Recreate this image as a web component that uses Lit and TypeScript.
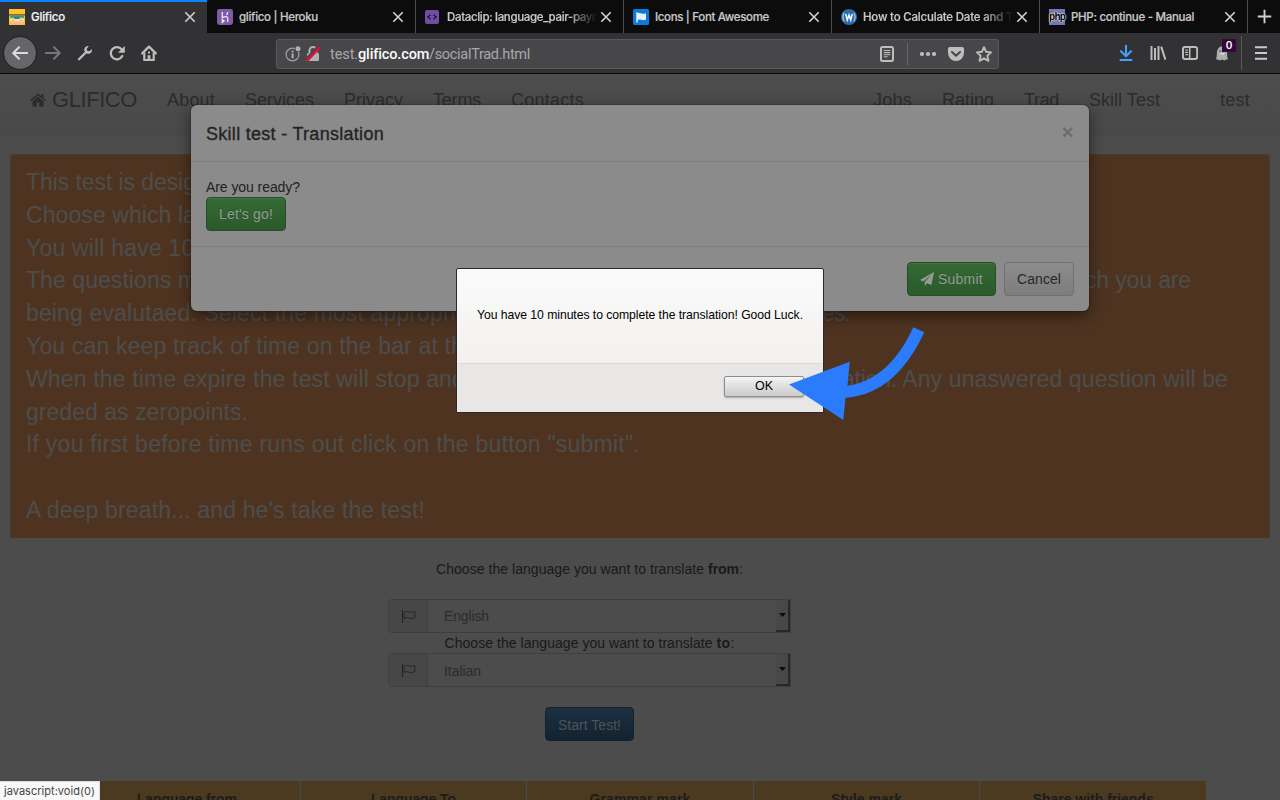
import { LitElement, html, css, svg } from "lit";
import { customElement, property } from "lit/decorators.js";

/** One line of text spread over a given width by letter spacing. */
@customElement("fit-text")
export class FitText extends LitElement {
  @property() text = "";
  @property({ type: Number }) w = 0;
  static styles = css`
    :host { display: inline-block; white-space: pre; flex: none; }
    .t { display: inline-block; white-space: pre; }
  `;
  render() {
    return html`<span class="t">${this.text}</span>`;
  }
  updated() {
    const span = this.renderRoot.querySelector(".t") as HTMLElement;
    span.style.letterSpacing = "0px";
    const natural = span.getBoundingClientRect().width;
    if (this.w && this.text.length) {
      span.style.letterSpacing = `${(this.w - natural) / this.text.length}px`;
      this.style.width = `${this.w}px`;
    }
  }
}

const fit = (text: string, w: number) => html`<fit-text .text=${text} .w=${w}></fit-text>`;

const icon = (body: unknown, size = 16, box = 16) =>
  html`<svg width=${size} height=${size} viewBox="0 0 ${box} ${box}" fill="none">${body}</svg>`;

const S = "#bdbdbe";
const icons = {
  glifico: svg`<path d="M0 0h16v16H0z" fill="#ffc22f"/><path d="M0 5.300h16v1.200H0z" fill="#5c4d28"/><path d="M1 6.500h14v2.200H1z" fill="#2b9c94"/><path d="M5.500 8.500h5v1.300h-5z" fill="#163f48"/><path d="M1 9.800h14v2.400H1z" fill="#e9dcc4"/><path d="M2 12h12v1.500H2z" fill="#f3c9a0"/><path d="M4 13.500h8V16H4z" fill="#f8b27c"/><path d="M3 11h2v1H3zM11 11h2v1h-2z" fill="#cdb6a6"/>`,
  heroku: svg`<rect width="16" height="16" rx="2.400" fill="#7e5ba6"/><path d="M5.300 3v5.700c3-1.500 5.400-1.600 5.400.600V13M10.700 3c0 1.300-.500 2.200-1.200 3M5.300 10.500l1.800 1.400-1.800 1.400z" stroke="#eee6f6" stroke-width="1.300"/>`,
  clip: svg`<rect x="0" y="1" width="14" height="14" rx="2" fill="#6f4fa5"/><path d="M5.500 5.800 2.800 8l2.700 2.200M8.500 5.800 11.200 8l-2.700 2.200" stroke="#17102a" stroke-width="1.200"/>`,
  fa: svg`<rect width="16" height="16" rx="1.500" fill="#0a7bdc"/><path d="M4 3.200v10.300" stroke="#e8f1fa" stroke-width="1.500"/><path d="M4 4.500c2-.900 3.300-.500 4.700 0 1.400.500 2.700.200 4.300-.300v6.300c-2 .900-3.500.700-4.900.200-1.500-.500-2.600-.200-4.100.500z" fill="#e8f1fa"/>`,
  wiki: svg`<circle cx="8" cy="8" r="8" fill="#2b6cab"/><path d="M3.200 3.700C1.500 6.500 1.500 9.500 3.200 12.300M12.800 3.700c1.700 2.800 1.700 5.800 0 8.600" stroke="#cfe0f0" stroke-width="1"/><path d="m4.700 5 1.600 6L8 6l1.700 5 1.600-6" stroke="#fff" stroke-width="1.500"/>`,
  x: svg`<path d="m2.600 2.600 10.800 10.800M13.400 2.600 2.600 13.400" stroke="#d0d0d1" stroke-width="1.900"/>`,
  plus: svg`<path d="M8 .800v14.400M.800 8h14.400" stroke="#d0d0d1" stroke-width="2"/>`,
  back: svg`<path d="M15.200 8H1.500M7 2.200 1.200 8 7 13.800" stroke="#dcdcdd" stroke-width="2" stroke-linecap="round" stroke-linejoin="round"/>`,
  fwd: svg`<path d="M.800 8h14M9 2.200 14.800 8 9 13.800" stroke="#77777a" stroke-width="2" stroke-linecap="round" stroke-linejoin="round"/>`,
  wrench: svg`<path d="M2 14.200 9 7.200" stroke="${S}" stroke-width="2.300" stroke-linecap="round"/><path d="M14.800 4.300 12.300 6.200l-2.200-.400-.400-2.100L11.800 1C8.800.600 6.700 3 7.400 6L10 8.700c3.300.600 5.700-1.400 4.800-4.400z" fill="${S}"/>`,
  reload: svg`<path d="M13.300 11A6.100 6.100 0 1 1 12.700 4.400" stroke="${S}" stroke-width="2.300" stroke-linecap="round"/><path d="M15.800.900v6.900H8.900z" fill="${S}"/>`,
  home: svg`<path d="M1.200 8.400 8 1.600l6.800 6.800" stroke="${S}" stroke-width="2.200" stroke-linecap="round" stroke-linejoin="round"/><path d="M3.300 7.500V15h9.400V7.500" stroke="${S}" stroke-width="2.200" stroke-linejoin="round"/><path d="M6.600 10.200h2.800V15H6.600zM7 6.500h2v2H7z" fill="${S}"/>`,
  info: svg`<circle cx="7.500" cy="8.500" r="6.400" stroke="#a4a4a6" stroke-width="1.200"/><path d="M6.600 7.400h2v4.900h-2z" fill="#b1b1b3"/><circle cx="7.600" cy="5.500" r="1.100" fill="#b1b1b3"/><circle cx="13" cy="2.700" r="3.300" fill="#474749"/><circle cx="13" cy="2.700" r="2.500" fill="#b1b1b3"/>`,
  lock: svg`<path d="M4.500 8V4.500a3.500 3.500 0 0 1 7 0V8" stroke="#b1b1b3" stroke-width="2"/><rect x="2" y="7.300" width="12" height="7.700" rx="1" fill="#b1b1b3"/><path d="M1 14.500 14 .900" stroke="#474749" stroke-width="4.200"/><path d="M1.500 15 14.700 1.200" stroke="#ff0039" stroke-width="2"/>`,
  reader: svg`<rect x="2" y="1" width="12" height="14" rx="1.500" stroke="${S}" stroke-width="2"/><path d="M4.700 4.500h6.600M4.700 6.600h6.600M4.700 8.700h6.600M4.700 10.800h4" stroke="${S}" stroke-width="1.100"/>`,
  dots: svg`<circle cx="2" cy="8" r="2.100" fill="${S}"/><circle cx="8" cy="8" r="2.100" fill="${S}"/><circle cx="14" cy="8" r="2.100" fill="${S}"/>`,
  pocket: svg`<path d="M1.800 1h12.400A1.800 1.800 0 0 1 16 2.800V7A8 8 0 0 1 0 7V2.800A1.800 1.800 0 0 1 1.800 1z" fill="${S}"/><path d="M4 6l4 3.800L12 6" stroke="#474749" stroke-width="2" stroke-linecap="round" stroke-linejoin="round"/>`,
  star: svg`<path d="m8 1.200 2.100 4.600 5 .600-3.700 3.400 1 5L8 12.300l-4.400 2.500 1-5L.900 6.400l5-.600z" stroke="${S}" stroke-width="1.900" stroke-linejoin="round"/>`,
  download: svg`<path d="M8 .500v10.500M3 6.300 8 11.300l5-5" stroke="#45a1ff" stroke-width="2" stroke-linecap="round" stroke-linejoin="round"/><path d="M2.500 15h11" stroke="#45a1ff" stroke-width="2" stroke-linecap="round"/>`,
  library: svg`<path d="M1.500 1v14M5 3v12M8.500 1v14M11.200 1.600l4.200 13" stroke="${S}" stroke-width="2"/>`,
  sidebar: svg`<rect x="1" y="2" width="14.200" height="12" rx="2" stroke="${S}" stroke-width="2"/><path d="M7.700 2v12" stroke="${S}" stroke-width="1.600"/><path d="M3 5h3M3 7.300h3M3.500 9.600H6" stroke="${S}" stroke-width="1.200"/>`,
  ghost: svg`<path d="M1.700 14.200c1.300-1.500 1-3.500 1.200-6.200C3.200 4 5 1.500 8 1.500s4.900 2.500 5.100 6.500c.100 2.700-.100 4.700 1.200 6.200l-2.200.400-1.700 1-2.400-1-2.300 1-1.900-1z" fill="#adadae"/><path d="M5.800 8.300c1.200 2 3.800 2 5 0z" fill="#dedede"/><circle cx="6.300" cy="6" r="1" fill="#6a6a6b"/>`,
  menu: svg`<path d="M2 2.300h12M2 8h12M2 13.700h12" stroke="#cacacb" stroke-width="2.100"/>`,
  house: svg`<path d="M8 1.500 0 8.300l1 1L8 3.600l7 5.700 1-1-2.500-2.100V2h-2.200v2.300zM8 4.800 2.500 9.300V14.500h4.200v-4h2.600v4h4.200V9.300z" fill="#2b2b2b"/>`,
  plane: svg`<path d="M14 0 0 8l3.300 1.400L11.500 2.500 4.800 10v4l2.200-2.800 4.400 1.800z" fill="#969b94"/>`,
  flag: svg`<path d="M1.500 1v13" stroke="#262626" stroke-width="1.100"/><path d="M3 3.500c2-1.500 3.500-1.300 5.300-.600 1.700.700 3.300.500 5.500-.400v6.200c-2.200 1.100-4 1.100-5.800.500-1.700-.600-3.300-.800-5 .400z" stroke="#262626" stroke-width="1"/>`,
};

const tabs = [
  { title: "Glifico", w: 34, icon: icons.glifico, cls: "tab active" },
  { title: "glifico | Heroku", w: 79, icon: icons.heroku, cls: "tab second" },
  { title: "Dataclip: language_pair-paym", w: 155, icon: icons.clip, cls: "tab long" },
  { title: "Icons | Font Awesome", w: 114, icon: icons.fa, cls: "tab" },
  { title: "How to Calculate Date and Ti", w: 153, icon: icons.wiki, cls: "tab long" },
  { title: "PHP: continue - Manual", w: 123, icon: null, cls: "tab" },
];

const copy: [string, number][][] = [
  [["This test is designed", 208], [" to evaluate your skills.", 240]],
  [["Choose which la", 170], ["nguage pair you want to test.", 300]],
  [["You will have 10 ", 175], ["minutes.", 86]],
  [["The questions m", 171], ["ay differ in topic and level, according to the language combination for whi", 888], ["ch you are", 106]],
  [["being evalutaed. Select the most appropri", 430], ["ate answer among the possible choic", 366], ["es.", 28]],
  [["You can keep track of time on the bar at th", 438], ["e bottom of the page", 216]],
  [["When the time expire the test will stop and", 439], [" you will not see the next transl", 377], ["ation.", 55], [" Any unaswered question will be", 331]],
  [["greded as zeropoints.", 222]],
  [["If you first before time runs out click on the button \"submit\".", 614]],
  [[" ", 6]],
  [["A deep breath... and he's take the test!", 399]],
];

const columns: [string, number][] = [
  ["Language from", 100],
  ["Language To", 85],
  ["Grammar mark", 101],
  ["Style mark", 71],
  ["Share with friends", 121],
];

@customElement("app-root")
export class AppRoot extends LitElement {
  static styles = css`
    :host { display: block; position: relative; width: 1280px; height: 800px; overflow: hidden; background: #4c4c4c; color: #222; font: 14px/20px "Liberation Sans", Arial, sans-serif; }
    * { box-sizing: border-box; }
    svg { display: block; flex: none; }
    .tabs { display: flex; height: 33px; background: #0c0c0d; font: 500 11.5px/33px Inter, Roboto, sans-serif; color: #c8c8c9; -webkit-text-stroke: .2px currentColor; }
    .tab { width: 208px; flex: none; display: flex; align-items: center; padding: 1px 10px 0 9px; border-right: 1px solid #4e4e4f; }
    .tab.active { width: 207px; background: #323234; border-top: 2px solid #0a84ff; border-right: 0; padding-top: 0; padding-bottom: 1px; color: #f3f3f4; }
    .tab.second { width: 209px; padding-left: 10px; }
    .label { margin-left: 6px; flex: 1; overflow: hidden; height: 32px; }
    .long .label { -webkit-mask-image: linear-gradient(90deg, #000 120px, transparent 150px); }
    .php { width: 16px; height: 16px; background: #7478ae; color: #000; font: bold 10px/15px "Liberation Sans", sans-serif; letter-spacing: -.7px; text-align: center; flex: none; text-shadow: 0 0 1px #fff, 0 0 1px #fff, 0 0 2px #fff; -webkit-text-stroke: 0; }
    .new { width: 32px; display: flex; align-items: center; justify-content: center; }
    .bar { display: flex; align-items: center; height: 41px; background: #323234; border-bottom: 1px solid #0c0c0d; padding-left: 4px; }
    .slot { width: 32px; height: 32px; display: flex; align-items: center; justify-content: center; flex: none; position: relative; }
    .round { border-radius: 50%; background: #666668; outline: 1px solid #232325; }
    .gap { margin-left: 1px; }
    .url { width: 723px; height: 30px; margin: 1px 0 0 111px; background: #474749; border: 1px solid #5a5a5c; border-radius: 3px; display: flex; align-items: center; padding: 0 6px 0 8px; font: 14.5px/30px Roboto, "Noto Sans", sans-serif; color: #a8a8ab; }
    .url .lock { margin-left: 4px; }
    .addr { display: flex; margin-left: 9px; flex: 1; padding-top: 2px; }
    .addr b { color: #fafafb; font-weight: 500; }
    .sep { width: 1px; height: 22px; background: #66666e; margin: 0 12px; }
    .acts { display: flex; gap: 12px; }
    .right { display: flex; align-items: center; margin-left: 111px; }
    .badge { position: absolute; left: 16px; top: 2px; width: 14px; height: 13px; background: #33083a; color: #fff; font: 600 10px/13px Inter, sans-serif; text-align: center; }
    .rsep { width: 1px; height: 34px; background: #5a5a5c; margin: 0 3px 0 3px; }
    .nav { height: 61px; display: flex; justify-content: space-between; padding: 15px 30px 0; background: linear-gradient(#4d4d4d, #494949); border-bottom: 1px solid #464646; box-shadow: 0 1px 5px rgba(0,0,0,.03); font-size: 18px; line-height: 22px; color: #2b2b2b; }
    .links { display: flex; gap: 30px; }
    .brand { display: flex; gap: 6px; font-size: 22px; align-items: center; height: 22px; }
    .links .user { margin-left: 30px; }
    .jumbo { margin: 19px 10px 0; height: 384px; padding: 11px 15px 0; background: #4e3420; border: 1px solid #4c3d24; border-bottom-color: #4e3710; border-radius: 4px 4px 0 0; color: #4d4d4d; font-size: 23px; line-height: 32.8px; }
    .line { height: 32.8px; display: flex; }
    .form { width: 403px; margin: 21px 0 0 388px; display: flex; flex-direction: column; align-items: center; color: #191919; }
    .q { display: flex; height: 20px; }
    .first { margin-bottom: 20px; }
    .group { width: 403px; height: 34px; display: flex; border: 1px solid #3e3e3e; border-radius: 4px 0 0 4px; }
    .addon { width: 39px; background: #474747; border-right: 1px solid #3e3e3e; display: flex; align-items: center; justify-content: center; }
    .select { flex: 1; padding-left: 16px; line-height: 33px; color: #2b2b2b; }
    .low { padding-top: 1px; }
    .drop { width: 14px; height: 32px; background: #484848; border-right: 2px solid #282828; border-bottom: 2px solid #282828; display: flex; align-items: center; justify-content: center; }
    .btn { height: 34px; border-radius: 4px; display: inline-flex; align-items: center; justify-content: center; border: 1px solid; gap: 4px; padding-bottom: 1px; }
    .blue { width: 89px; margin-top: 20px; padding: 1px 0 0; color: #505356; background: linear-gradient(#1b3042, #14222f); border-color: #14212d; }
    .green { color: #969b94; background: linear-gradient(#336a33, #2b592b); border-color: #244f24; text-shadow: 0 -1px 0 rgba(0,0,0,.2); box-shadow: inset 0 1px 0 rgba(255,255,255,.08); }
    .grey { color: #282828; background: linear-gradient(#8c8c8c, #7d7d7d); border-color: #707070; }
    .table { display: flex; margin: 40px 74px 0; width: 1132px; height: 40px; background: #4b3a1f; font-weight: bold; color: #1c1c1c; }
    .table .cell { flex: 1; padding-top: 8px; text-align: center; border-right: 1px solid #494949; }
    .table .cell:last-child { border: 0; }
    .modal { position: absolute; left: 191px; top: 105px; width: 898px; height: 206px; border-radius: 6px; background: #8b8b8b; box-shadow: 0 5px 15px rgba(0,0,0,.5), 0 0 0 1px rgba(0,0,0,.12); color: #222; }
    .head { height: 57px; border-bottom: 1px solid #7d7d7d; padding: 19px 15px 0; display: flex; justify-content: space-between; font-size: 18px; -webkit-text-stroke: .35px #282828; }
    .head .x { width: 12px; height: 16px; padding-top: 2px; }
    .body { height: 85px; padding: 15px 15px 0; border-bottom: 1px solid #7d7d7d; }
    .body .btn { width: 80px; }
    .foot { padding: 15px; display: flex; justify-content: flex-end; gap: 8px; }
    .submit { width: 89px; }
    .cancel { width: 70px; }
    .alert { position: absolute; left: 456px; top: 268px; width: 368px; height: 145px; border: 1px solid #2b2a29; border-radius: 2px; background: linear-gradient(rgba(252,252,252,.985), rgba(245,244,243,.985) 95px); color: #000; font-size: 12.2px; }
    .msg { height: 94px; padding: 36px 0 0 20px; }
    .ok-row { height: 49px; background: #e8e7e6; border-top: 1px solid #dadada; display: flex; justify-content: flex-end; padding: 12px 19px 0 0; }
    .ok { width: 80px; height: 21px; border: 1px solid #8d8d8d; border-radius: 2px; background: linear-gradient(#f5f5f5, #dedede 50%, #cbcbcb); text-align: center; font-size: 12.5px; line-height: 19px; box-shadow: 0 1px 2px rgba(0,0,0,.25); }
    .arrow { position: absolute; left: 780px; top: 320px; }
    .status { position: absolute; left: 0; top: 781px; width: 100px; height: 19px; background: #f8f8f8; border-top: 1px solid #ddd; border-right: 1px solid #ddd; color: #444; font: 11px/19px Inter, Roboto, sans-serif; padding-left: 4px; }
  `;

  group(value: string, w: number, cls = "select") {
    return html`<div class="group">
      <div class="addon">${icon(icons.flag, 15, 15)}</div>
      <div class=${cls}>${fit(value, w)}</div>
      <div class="drop"><svg width="7" height="4" viewBox="0 0 7 4"><path d="M0 0h7L3.500 4z" fill="#0a0a0a"/></svg></div>
    </div>`;
  }

  render() {
    return html`
      <div class="tabs">
        ${tabs.map((t) => html`<div class=${t.cls}>
          ${t.icon ? icon(t.icon) : html`<span class="php">php</span>`}
          <span class="label">${fit(t.title, t.w)}</span>${icon(icons.x, 14)}
        </div>`)}
        <div class="new">${icon(icons.plus, 15)}</div>
      </div>
      <div class="bar">
        <div class="slot round">${icon(icons.back)}</div>
        <div class="slot gap">${icon(icons.fwd)}</div>
        <div class="slot">${icon(icons.wrench)}</div>
        <div class="slot">${icon(icons.reload)}</div>
        <div class="slot">${icon(icons.home)}</div>
        <div class="url">
          ${icon(icons.info)}<span class="lock">${icon(icons.lock)}</span>
          <div class="addr">${fit("test.", 28)}<b>${fit("glifico.com", 71)}</b>${fit("/socialTrad.html", 101)}</div>
          ${icon(icons.reader)}<span class="sep"></span>
          <div class="acts">${icon(icons.dots)}${icon(icons.pocket)}${icon(icons.star)}</div>
        </div>
        <div class="right">
          <div class="slot">${icon(icons.download)}</div>
          <div class="slot">${icon(icons.library)}</div>
          <div class="slot">${icon(icons.sidebar)}</div>
          <div class="slot">${icon(icons.ghost)}<span class="badge">0</span></div>
          <span class="rsep"></span>
          <div class="slot">${icon(icons.menu)}</div>
        </div>
      </div>
      <div class="nav">
        <div class="links">
          <div class="brand">${icon(icons.house)}${fit("GLIFICO", 85)}</div>
          ${fit("About", 48)}${fit("Services", 69)}${fit("Privacy", 59)}${fit("Terms", 48)}${fit("Contacts", 73)}
        </div>
        <div class="links">
          ${fit("Jobs", 39)}${fit("Rating", 52)}${fit("Trad", 35)}${fit("Skill Test", 71)}<span class="user">${fit("test", 30)}</span>
        </div>
      </div>
      <div class="jumbo">
        ${copy.map((line) => html`<div class="line">${line.map(([t, w]) => fit(t, w))}</div>`)}
      </div>
      <div class="form">
        <div class="q first">${fit("Choose the language you want to translate ", 272)}<b>${fit("from", 31)}</b>${fit(":", 4)}</div>
        ${this.group("English", 45)}
        <div class="q">${fit("Choose the language you want to translate ", 272)}<b>${fit("to", 14)}</b>${fit(":", 4)}</div>
        ${this.group("Italian", 37, "select low")}
        <div class="btn blue">${fit("Start Test!", 63)}</div>
      </div>
      <div class="table">${columns.map(([t, w]) => html`<div class="cell">${fit(t, w)}</div>`)}</div>
      <div class="modal">
        <div class="head">${fit("Skill test - Translation", 178)}
          <span class="x"><svg width="12" height="12" viewBox="0 0 12 12"><path d="m1.500 2 8.500 8.500M10 2l-8.500 8.500" stroke="#6b6b6b" stroke-width="2.200"/></svg></span>
        </div>
        <div class="body">
          <div>${fit("Are you ready?", 94)}</div>
          <div class="btn green">${fit("Let's go!", 54)}</div>
        </div>
        <div class="foot">
          <div class="btn green submit">${icon(icons.plane, 14, 14)}${fit("Submit", 45)}</div>
          <div class="btn grey cancel">${fit("Cancel", 44)}</div>
        </div>
      </div>
      <div class="alert">
        <div class="msg">${fit("You have 10 minutes to complete the translation! Good Luck.", 326)}</div>
        <div class="ok-row"><div class="ok">${fit("OK", 18)}</div></div>
      </div>
      <svg class="arrow" width="150" height="105" viewBox="780 320 150 105">
        <path d="M789 384.500 849.700 361.700 847.500 386C879 381 899 358 913.300 327.300L924.300 332.300C908 367 884 395 845.500 397.800L843.300 420Z" fill="#2a7cfd"/>
      </svg>
      <div class="status">${fit("javascript:void(0)", 91)}</div>
    `;
  }
}
